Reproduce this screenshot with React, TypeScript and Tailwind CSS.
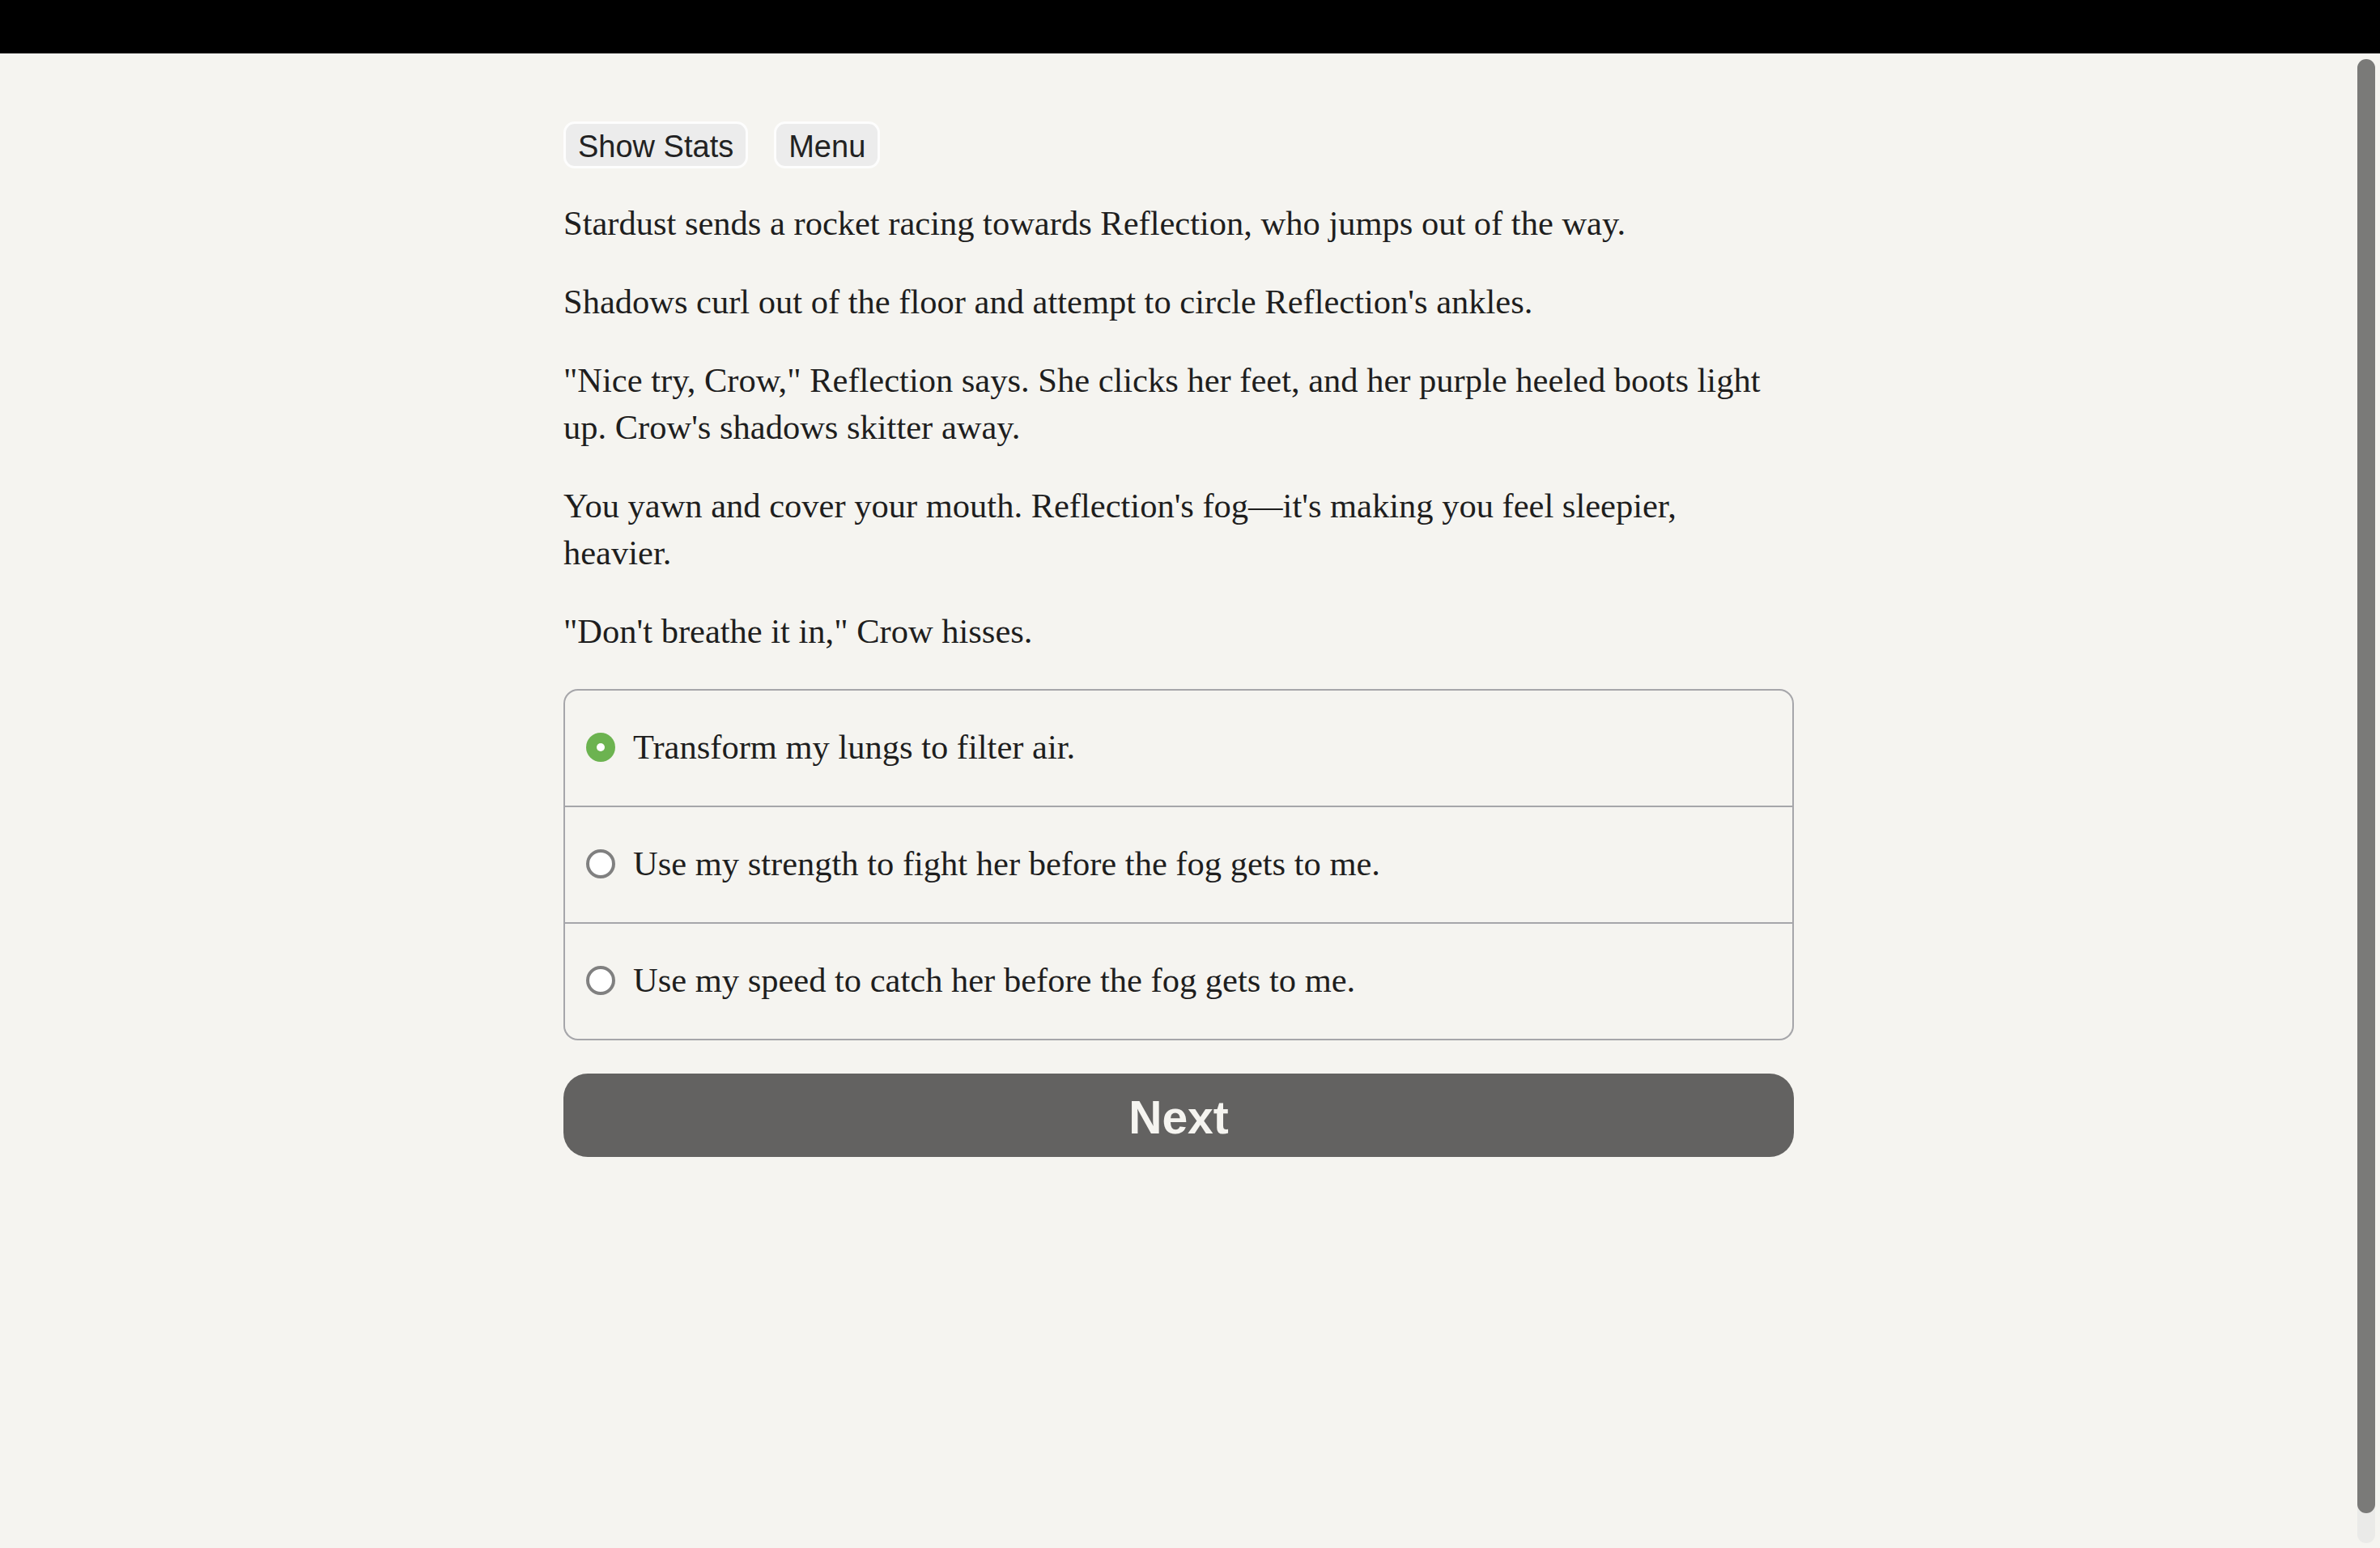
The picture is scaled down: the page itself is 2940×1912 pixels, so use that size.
import { useState } from "react";

// each paragraph keeps the line breaks seen in the reference
const paragraphs: string[][] = [
  ["Stardust sends a rocket racing towards Reflection, who jumps out of the way."],
  ["Shadows curl out of the floor and attempt to circle Reflection's ankles."],
  [
    "\"Nice try, Crow,\" Reflection says. She clicks her feet, and her purple heeled boots light",
    "up. Crow's shadows skitter away.",
  ],
  ["You yawn and cover your mouth. Reflection's fog\u2014it's making you feel sleepier,", "heavier."],
  ["\"Don't breathe it in,\" Crow hisses."],
];

const choices = [
  "Transform my lungs to filter air.",
  "Use my strength to fight her before the fog gets to me.",
  "Use my speed to catch her before the fog gets to me.",
];

function Radio({ checked }: { checked: boolean }) {
  if (checked) {
    return (
      <span className="flex h-[36px] w-[36px] shrink-0 items-center justify-center rounded-full bg-[#6cb350]">
        <span className="h-[10px] w-[10px] rounded-full bg-white" />
      </span>
    );
  }
  return <span className="h-[36px] w-[36px] shrink-0 rounded-full border-[4px] border-[#808080] bg-white" />;
}

function TopButton({ label }: { label: string }) {
  return (
    <button className="h-[58px] rounded-[14px] border-[3px] border-[#fdfdfd] bg-[#ececec] px-[15px] pt-[6px] pb-[2px] font-['Liberation_Sans',Arial,sans-serif] text-[38px] leading-[44px] text-[#222]">
      {label}
    </button>
  );
}

export default function App() {
  const [selected, setSelected] = useState(0);

  return (
    <div className="flex h-screen flex-col bg-[#f5f4f0]">
      <div className="h-[66px] shrink-0 bg-black" />

      <div className="flex flex-1">
        <main className="flex flex-1 justify-center">
          <div className="w-[1520px] pt-[84px]">
            <div className="flex gap-[32px]">
              <TopButton label="Show Stats" />
              <TopButton label="Menu" />
            </div>

            <div className="mt-[39px] flex flex-col gap-[39px] font-['Liberation_Serif','Times_New_Roman',serif] text-[42.5px] leading-[58px] text-[#1e1e1e]">
              {paragraphs.map((lines) => (
                <p key={lines[0]}>
                  {lines.map((l, i) => (
                    <span key={l}>
                      {i > 0 && <br />}
                      {l}
                    </span>
                  ))}
                </p>
              ))}
            </div>

            <div className="mt-[42px] overflow-hidden rounded-[18px] border-[2px] border-[#a6a6aa]">
              {choices.map((c, i) => (
                <label
                  key={c}
                  onClick={() => setSelected(i)}
                  className={
                    "flex cursor-pointer items-center gap-[22px] px-[26px] pt-[41px] pb-[43px] " +
                    (i > 0 ? "border-t-[2px] border-[#a6a6aa]" : "")
                  }
                >
                  <Radio checked={selected === i} />
                  <span className="font-['Liberation_Serif','Times_New_Roman',serif] text-[42.5px] leading-[58px] text-[#1e1e1e]">
                    {c}
                  </span>
                </label>
              ))}
            </div>

            <button className="mt-[41px] flex h-[103px] w-full items-center justify-center rounded-[30px] bg-[#636261] pt-[4px] font-['Liberation_Sans',Arial,sans-serif] text-[57px] font-bold leading-[66px] text-[#f5f4f0]">
              Next
            </button>
          </div>
        </main>

        {/* scrollbar */}
        <div className="flex w-[28px] shrink-0 pt-[7px] pr-[6px] pb-[6px]">
          <div className="flex flex-1 flex-col rounded-full bg-[#eaeae8]">
            <div className="h-[1796px] rounded-full bg-[#7a7a78]" />
          </div>
        </div>
      </div>
    </div>
  );
}
